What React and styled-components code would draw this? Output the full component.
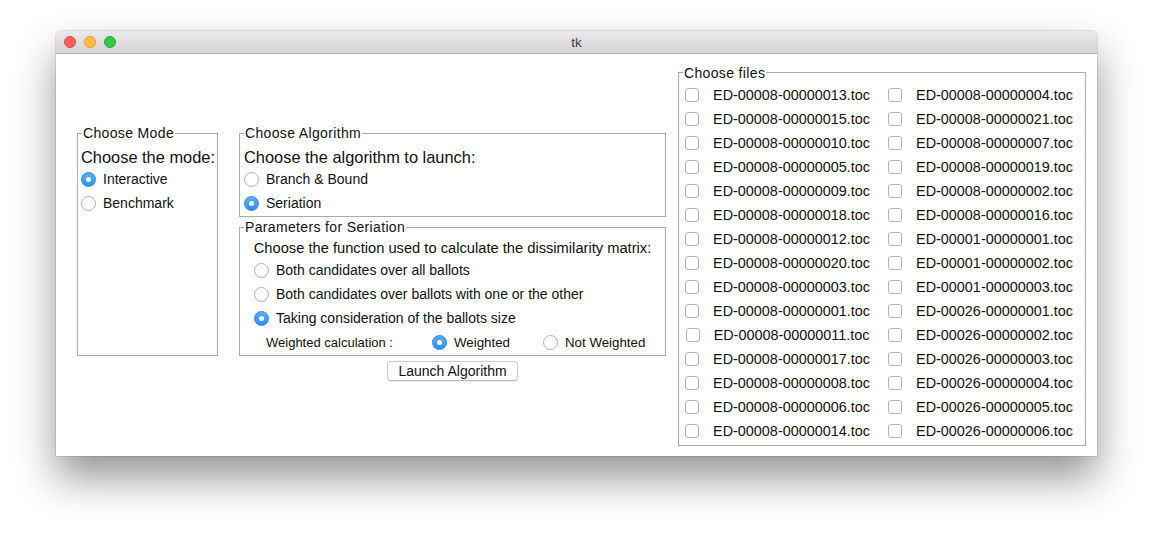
import React, { useState } from "react";
import styled, { createGlobalStyle } from "styled-components";

const GlobalStyle = createGlobalStyle`
  html, body {
    margin: 0;
    padding: 0;
    background: #ffffff;
  }
  body {
    font-family: "Liberation Sans", Arial, sans-serif;
    color: #111;
  }
`;

const Page = styled.div`
  width: 1153px;
  height: 536px;
  padding: 31px 0 0 56px;
  box-sizing: border-box;
  overflow: hidden;
`;

const Window = styled.div`
  width: 1041px;
  height: 425px;
  border-radius: 5px 5px 0 0;
  background: #fff;
  box-shadow: 0 22px 42px rgba(0, 0, 0, 0.42), 0 0 0 1px rgba(0, 0, 0, 0.1);
  display: flex;
  flex-direction: column;
  overflow: hidden;
`;

const TitleBar = styled.div`
  position: relative;
  height: 22px;
  flex: none;
  background: linear-gradient(#ebe9eb, #d5d3d5);
  border-bottom: 1px solid #b3b1b3;
  display: flex;
  align-items: center;
  justify-content: center;
`;

const Lights = styled.div`
  position: absolute;
  left: 8px;
  top: 5px;
  display: flex;
  gap: 8px;
`;

const Light = styled.span`
  width: 12px;
  height: 12px;
  border-radius: 50%;
  box-sizing: border-box;
  background: ${(p) => p.$fill};
  border: 0.5px solid ${(p) => p.$edge};
`;

const Title = styled.span`
  font-size: 13.5px;
  color: #3f3f3f;
`;

const Body = styled.div`
  flex: 1;
  display: flex;
  align-items: center;
  padding: 0 11px 0 21px;
`;

const LeftGroup = styled.div`
  display: grid;
  grid-template-columns: 141px 427px;
  grid-template-rows: auto auto auto;
  column-gap: 21px;
  padding-bottom: 4px;
`;

const Frame = styled.fieldset`
  margin: 0;
  padding: 0 0 ${(p) => p.$padBottom || 0}px 0;
  min-width: 0;
  border: 1px solid #ababab;
  box-sizing: border-box;
  grid-column: ${(p) => p.$col || "auto"};
  grid-row: ${(p) => p.$row || "auto"};
  margin-top: ${(p) => p.$top || 0}px;
`;

const Legend = styled.legend`
  margin-left: 4px;
  padding: 0 1px;
  font-size: 14px;
  line-height: 16px;
  letter-spacing: 0.35px;
  color: #111;
`;

const Inner = styled.div`
  padding: ${(p) => p.$pad};
`;

const Heading = styled.div`
  font-size: ${(p) => p.$size || 16.4}px;
  line-height: 20px;
  white-space: nowrap;
  text-align: ${(p) => p.$align || "left"};
`;

const RadioRow = styled.label`
  display: flex;
  align-items: center;
  height: 24px;
  gap: 7px;
  font-size: 14px;
  white-space: nowrap;
  padding-left: ${(p) => p.$indent || 0}px;
`;

const Circle = styled.span`
  width: 15px;
  height: 15px;
  border-radius: 50%;
  box-sizing: border-box;
  flex: none;
  display: flex;
  align-items: center;
  justify-content: center;
  background: ${(p) => (p.$on ? "linear-gradient(#5aaefc, #2f8ff6)" : "#fff")};
  border: 1px solid ${(p) => (p.$on ? "#2f88ee" : "#b2b2b2")};
  &::after {
    content: "";
    width: 5px;
    height: 5px;
    border-radius: 50%;
    background: #fff;
    display: ${(p) => (p.$on ? "block" : "none")};
  }
`;

const WeightRow = styled.div`
  display: grid;
  grid-template-columns: 166px 111px auto;
  align-items: center;
  height: 24px;
  padding-left: 26px;
  font-size: 13px;
`;

const WeightLabel = styled.span`
  white-space: nowrap;
`;

const WeightOption = styled.label`
  display: flex;
  align-items: center;
  gap: 7px;
  font-size: 13.3px;
  white-space: nowrap;
`;

const ButtonCell = styled.div`
  grid-column: 2;
  grid-row: 3;
  display: flex;
  justify-content: center;
  padding-top: 5px;
`;

const Button = styled.button`
  width: 131px;
  height: 20px;
  padding: 0;
  background: #fff;
  border: 1px solid #cbcbcb;
  border-bottom-color: #b8b8b8;
  border-radius: 4px;
  font-family: "Liberation Sans", Arial, sans-serif;
  font-size: 14px;
  color: #111;
  box-shadow: 0 0.5px 1px rgba(0, 0, 0, 0.06);
`;

const FilesFrame = styled(Frame)`
  width: 408px;
  margin-left: 12px;
`;

const FileGrid = styled.div`
  display: grid;
  grid-template-columns: 197px 1fr;
  grid-auto-rows: 24px;
  padding: 2px 0 2px 0;
`;

const FileCell = styled.label`
  display: flex;
  align-items: center;
  justify-content: center;
  gap: 14px;
  font-size: 14.4px;
  white-space: nowrap;
`;

const Check = styled.span`
  width: 14px;
  height: 14px;
  box-sizing: border-box;
  border: 1px solid #b5b5b5;
  border-radius: 3px;
  background: #fff;
  flex: none;
`;

const leftFiles = [13, 15, 10, 5, 9, 18, 12, 20, 3, 1, 11, 17, 8, 6, 14].map(
  (n) => `ED-00008-${String(n).padStart(8, "0")}.toc`
);

const rightFiles = [
  "ED-00008-00000004.toc",
  "ED-00008-00000021.toc",
  "ED-00008-00000007.toc",
  "ED-00008-00000019.toc",
  "ED-00008-00000002.toc",
  "ED-00008-00000016.toc",
  "ED-00001-00000001.toc",
  "ED-00001-00000002.toc",
  "ED-00001-00000003.toc",
  "ED-00026-00000001.toc",
  "ED-00026-00000002.toc",
  "ED-00026-00000003.toc",
  "ED-00026-00000004.toc",
  "ED-00026-00000005.toc",
  "ED-00026-00000006.toc",
];

const dissimilarity = [
  "Both candidates over all ballots",
  "Both candidates over ballots with one or the other",
  "Taking consideration of the ballots size",
];

const App = () => {
  const [mode, setMode] = useState("Interactive");
  const [algo, setAlgo] = useState("Seriation");
  const [func, setFunc] = useState(2);
  const [weighted, setWeighted] = useState(true);

  const files = [];
  leftFiles.forEach((f, i) => {
    files.push(f, rightFiles[i]);
  });

  return (
    <Page>
      <GlobalStyle />
      <Window>
        <TitleBar>
          <Lights>
            <Light $fill="#fc605b" $edge="#de4841" />
            <Light $fill="#fdbc40" $edge="#dea034" />
            <Light $fill="#34c84a" $edge="#24a732" />
          </Lights>
          <Title>tk</Title>
        </TitleBar>
        <Body>
          <LeftGroup>
            <Frame $col="1" $row="1 / 3">
              <Legend>Choose Mode</Legend>
              <Inner $pad="6px 0 0 3px">
                <Heading>Choose the mode:</Heading>
                {["Interactive", "Benchmark"].map((m) => (
                  <RadioRow key={m} onClick={() => setMode(m)}>
                    <Circle $on={mode === m} />
                    {m}
                  </RadioRow>
                ))}
              </Inner>
            </Frame>

            <Frame $col="2" $row="1" $padBottom={1}>
              <Legend>Choose Algorithm</Legend>
              <Inner $pad="6px 0 0 4px">
                <Heading>Choose the algorithm to launch:</Heading>
                {["Branch & Bound", "Seriation"].map((a) => (
                  <RadioRow key={a} onClick={() => setAlgo(a)}>
                    <Circle $on={algo === a} />
                    {a}
                  </RadioRow>
                ))}
              </Inner>
            </Frame>

            <Frame $col="2" $row="2" $top={2} $padBottom={1}>
              <Legend>Parameters for Seriation</Legend>
              <Inner $pad="3px 0 0 0">
                <Heading $size={14.7} $align="center">
                  Choose the function used to calculate the dissimilarity matrix:
                </Heading>
                {dissimilarity.map((d, i) => (
                  <RadioRow key={d} $indent={14} onClick={() => setFunc(i)}>
                    <Circle $on={func === i} />
                    {d}
                  </RadioRow>
                ))}
                <WeightRow>
                  <WeightLabel>Weighted calculation :</WeightLabel>
                  <WeightOption onClick={() => setWeighted(true)}>
                    <Circle $on={weighted} />
                    Weighted
                  </WeightOption>
                  <WeightOption onClick={() => setWeighted(false)}>
                    <Circle $on={!weighted} />
                    Not Weighted
                  </WeightOption>
                </WeightRow>
              </Inner>
            </Frame>

            <ButtonCell>
              <Button>Launch Algorithm</Button>
            </ButtonCell>
          </LeftGroup>

          <FilesFrame>
            <Legend>Choose files</Legend>
            <FileGrid>
              {files.map((f) => (
                <FileCell key={f}>
                  <Check />
                  {f}
                </FileCell>
              ))}
            </FileGrid>
          </FilesFrame>
        </Body>
      </Window>
    </Page>
  );
};

export default App;
